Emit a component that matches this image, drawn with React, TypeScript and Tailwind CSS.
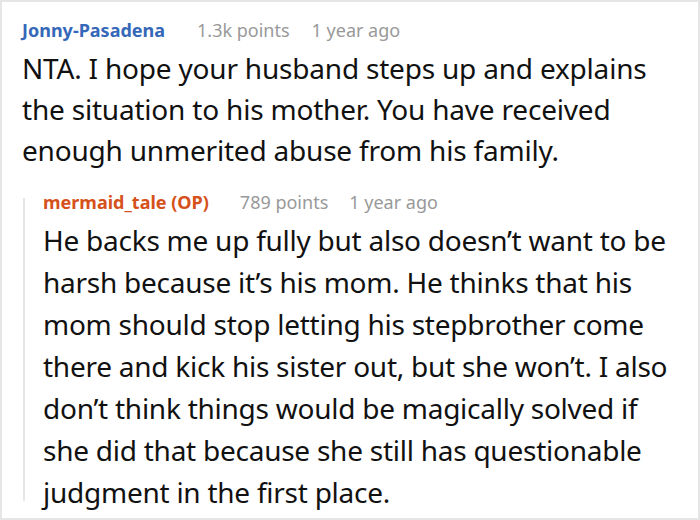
import React from "react";

export default function App() {
  const font = { fontFamily: '"Noto Sans", "Open Sans", sans-serif' };
  const first = [
    "NTA. I hope your husband steps up and explains",
    "the situation to his mother. You have received",
    "enough unmerited abuse from his family.",
  ];
  const reply = [
    "He backs me up fully but also doesn’t want to be",
    "harsh because it’s his mom. He thinks that his",
    "mom should stop letting his stepbrother come",
    "there and kick his sister out, but she won’t. I also",
    "don’t think things would be magically solved if",
    "she did that because she still has questionable",
    "judgment in the first place.",
  ];
  return (
    <div className="w-[700px] h-[520px] bg-white border-2 border-[#e6e6e6] overflow-hidden" style={font}>
      <div className="pl-[20px] pr-2 pt-[14px]">
        <div className="flex items-baseline text-[18px] leading-[28px]">
          <span className="font-bold text-[#3568b8]">Jonny-Pasadena</span>
          <span className="ml-[32px] text-[#999999]">1.3k points</span>
          <span className="ml-[22px] text-[#999999]">1 year ago</span>
        </div>
        <div className="text-[28px] leading-[41px] text-[#111111] mt-[4px] tracking-[-0.2px] whitespace-nowrap">
          {first.map((l) => (
            <div key={l}>{l}</div>
          ))}
        </div>
        <div className="flex mt-[17px]">
          <div className="w-[2px] ml-[1px] bg-[#e6e6e6] mt-[10px] mb-[12px]" />
          <div className="pl-[18px] pr-2">
            <div className="flex items-baseline text-[18px] leading-[28px]">
              <span className="font-bold text-[#d5511b]">mermaid_tale (OP)</span>
              <span className="ml-[31px] text-[#999999]">789 points</span>
              <span className="ml-[21px] text-[#999999]">1 year ago</span>
            </div>
            <div className="text-[28px] leading-[42px] text-[#111111] mt-[3px] tracking-[-0.25px] whitespace-nowrap">
              {reply.map((l) => (
                <div key={l}>{l}</div>
              ))}
            </div>
          </div>
        </div>
      </div>
    </div>
  );
}
